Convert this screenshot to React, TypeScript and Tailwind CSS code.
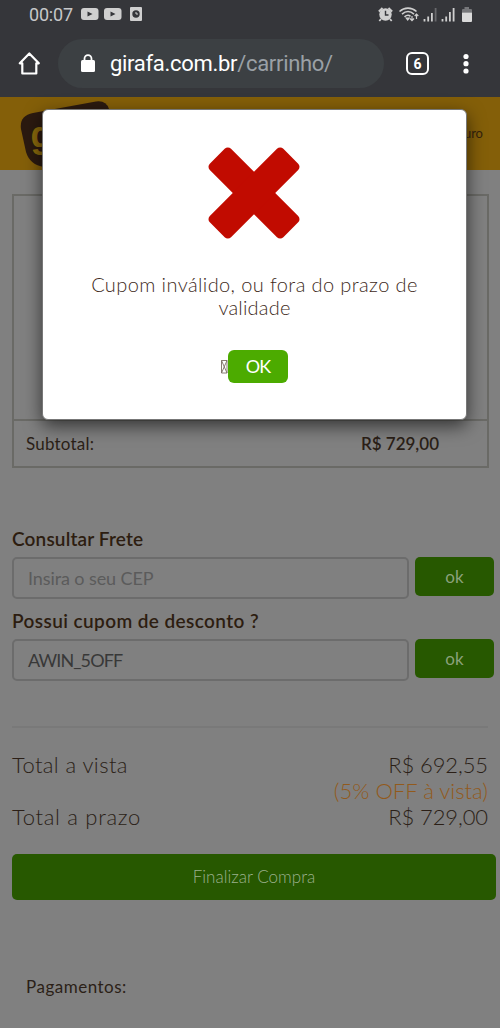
import type { ReactNode } from "react";

function StatusBar() {
  return (
    <div className="flex h-[30px] items-center justify-between pl-[29px] pr-[27px] text-[#c6c7c9]">
      <div className="flex items-center">
        <span className="w-[52px] whitespace-nowrap font-['Roboto'] text-[18px] leading-[30px] tracking-[-0.2px]">00:07</span>
        <svg width="62" height="16" viewBox="0 0 62 16" fill="#cfcfcf">
          <rect x="0" y="1" width="17.500" height="12" rx="3" />
          <rect x="23" y="1" width="17.500" height="12" rx="3" />
          <rect x="49" y="0" width="12" height="14" rx="1" />
          <path d="M6.500 4.500 11.500 7 6.500 9.500ZM29.500 4.500 34.500 7 29.500 9.500Z" fill="#35363a" />
          <circle cx="55" cy="7" r="3.700" fill="#35363a" />
          <path d="M55 5v2h2" stroke="#cfcfcf" strokeWidth="1" fill="none" />
        </svg>
      </div>
      <svg width="96" height="18" viewBox="0 0 96 18" fill="none">
        <circle cx="8.500" cy="8.500" r="6.200" fill="#cfcfcf" />
        <path d="M1.800 5.500 5.500 2M15.200 5.500 11.500 2M4 13 2.300 15M13 13 14.700 15" stroke="#cfcfcf" strokeWidth="1.800" />
        <path d="M8.500 4.800V9h3" stroke="#35363a" strokeWidth="1.400" />
        <path d="M22.500 5.500C27.500 1 34.500 1 39.500 5.500M25 8.200C29 4.600 33 4.600 37 8.200M27.500 10.800C29.700 9 32 9 33.500 10.300" stroke="#cfcfcf" strokeWidth="1.600" />
        <path d="M29.300 12.200h2.800l-1.400 1.800zM35 10v4.500M33 12.500l2 2.200 2-2.200M39.500 13V8.500M37.700 10l1.800-1.900 1.800 1.900" stroke="#cfcfcf" strokeWidth="1.200" />
        <path d="M47.500 13V15.500M51.200 10.500V15.500M54.900 7V15.500M65.500 13V15.500M69.200 10.500V15.500M72.900 6V15.500M76.600 2V15.500" stroke="#cfcfcf" strokeWidth="1.800" />
        <path d="M58.600 2V15.500" stroke="#68696c" strokeWidth="1.800" />
        <path d="M85 6.500V4q0-1 1-1h1.500V1h4.500V3h2q1 0 1 1v2.500z" fill="#76777a" />
        <path d="M85 6.500h10V15q0 1-1 1h-8q-1 0-1-1z" fill="#dadada" />
      </svg>
    </div>
  );
}

function BrowserBar() {
  return (
    <div className="flex h-[67px] items-center pl-[17px]">
      <svg width="24" height="24" viewBox="0 0 24 24" fill="none" stroke="#fff" strokeWidth="2.200" strokeLinejoin="round" className="shrink-0">
        <path d="M12.300 1.500 2.800 11.300H5.300V21.500H19.300V11.300H21.800Z" />
      </svg>
      <div className="ml-[17px] flex h-[49px] w-[326px] shrink-0 items-center rounded-full bg-[#3c4043] pl-[23px]">
        <svg width="14" height="18" viewBox="0 0 14 18" className="mb-[2px] shrink-0">
          <rect x="0" y="6" width="14" height="12" rx="1.500" fill="#fff" />
          <path d="M3.500 7V4.700a3.500 3.500 0 0 1 7 0V7" fill="none" stroke="#fff" strokeWidth="1.800" />
        </svg>
        <span className="ml-[15px] whitespace-nowrap font-['Roboto'] text-[22px] tracking-[-0.3px] text-white">
          girafa.com.br<span className="text-[#9aa0a6]">/carrinho/</span>
        </span>
      </div>
      <div className="ml-[22px] flex h-[23px] w-[23px] shrink-0 items-center justify-center rounded-[6px] border-2 border-white font-['Roboto'] text-[14px] font-bold leading-none text-white">
        6
      </div>
      <svg width="6" height="22" viewBox="0 0 6 22" fill="#fff" className="ml-[34px] shrink-0">
        <circle cx="3" cy="3.500" r="2.600" />
        <circle cx="3" cy="10.700" r="2.600" />
        <circle cx="3" cy="18" r="2.600" />
      </svg>
    </div>
  );
}

function SiteHeader() {
  return (
    <div className="flex h-[73px] justify-between overflow-hidden bg-[#845f09]">
      <svg width="120" height="73" viewBox="0 0 120 73" className="ml-[20px]">
        <path d="M13 16 76 4.500Q86 3 89 12L95 70H24Q10 68 6 55L1 32Q-1 19 13 16Z" fill="#2b1a10" />
        <text x="10.500" y="50" fontFamily="Liberation Sans" fontWeight="700" fontSize="36" fill="#8a690c">g</text>
      </svg>
      <span className="mr-[17px] mt-[27px] font-['Lato'] text-[13px] leading-[18px] text-[#34230d]">seguro</span>
    </div>
  );
}

function Field({ label, children }: { label: ReactNode; children: ReactNode }) {
  return (
    <div className="pl-[12px]">
      <div className="h-[29px] whitespace-nowrap text-[19px] font-semibold leading-[24px] text-[#2d1d10]">{label}</div>
      <div className="flex gap-[6px]">
        <div className="flex h-[42px] w-[397px] items-center rounded-[5px] border-2 border-[#6c6c6c] pl-[14px] text-[18px]">{children}</div>
        <button className="h-[39px] w-[79px] rounded-[5px] bg-[#275800] text-[17px] text-[#8ba17b]">ok</button>
      </div>
    </div>
  );
}

function Cart() {
  return (
    <div className="h-[858px] bg-[#808080] pt-[24px] text-[#2b1f17]">
      <div className="ml-[12px] h-[274px] w-[477px] border-2 border-[#6a6a66]">
        <div className="h-[225px] border-b-2 border-[#6a6a66]" />
        <div className="flex h-[46px] items-center justify-between pl-[12px] pr-[48px]">
          <span className="text-[17px] tracking-[0.2px]">Subtotal:</span>
          <span className="text-[17px] font-semibold">R$ 729,00</span>
        </div>
      </div>
      <div className="mt-[59px] flex flex-col gap-[11px] pt-px">
        <Field label={<span className="relative -top-px tracking-[0.15px]">Consultar Frete</span>}>
          <span className="tracking-[-0.1px] text-[#5b5b5b]">Insira o seu CEP</span>
        </Field>
        <Field label={<span className="relative -top-px tracking-[0.4px]">Possui cupom de desconto ?</span>}>
          <span className="tracking-[-0.9px] text-[#383838]">AWIN_5OFF</span>
        </Field>
      </div>
      <hr className="ml-[12px] mr-[12px] mt-[45px] border-t-2 border-[#797979]" />
      <div className="mx-[12px] mt-[24px] text-[22px] font-light leading-[26px]">
        <div className="flex justify-between">
          <span className="tracking-[0.4px]">Total a vista</span>
          <span className="tracking-[-0.1px]">R$ 692,55</span>
        </div>
        <div className="text-right text-[#925a1c]">(5% OFF à vista)</div>
        <div className="flex justify-between">
          <span className="tracking-[0.7px]">Total a prazo</span>
          <span className="tracking-[-0.1px]">R$ 729,00</span>
        </div>
      </div>
      <button className="ml-[12px] mt-[24px] block h-[46px] w-[484px] rounded-[5px] bg-[#275800] text-[17px] font-light text-[#9bb08c]">
        Finalizar Compra
      </button>
      <div className="ml-[26px] mt-[75px] text-[17px] leading-[24px] tracking-[0.5px]">Pagamentos:</div>
    </div>
  );
}

function CouponModal() {
  return (
    <div className="absolute left-[42px] top-[109px] flex h-[311px] w-[425px] flex-col items-center rounded-[6px] border border-[#777] bg-white shadow-[0_6px_18px_rgba(0,0,0,0.6)]">
      <svg width="92" height="92" viewBox="0 0 92 92" className="mr-[1px] mt-[37px]">
        <g fill="#c10b00" transform="rotate(45 46 46)">
          <rect x="-6" y="31" width="104" height="30" rx="4.500" />
          <rect x="31" y="-6" width="30" height="104" rx="4.500" />
        </g>
      </svg>
      <div className="mt-[34px] text-center text-[20px] font-light leading-[23px] text-[#402a1b]">
        <div className="tracking-[0.4px]">Cupom inválido, ou fora do prazo de</div>
        <div className="tracking-[0.2px]">validade</div>
      </div>
      <div className="mt-[31px] flex items-center">
        <svg width="7" height="14" viewBox="0 0 7 14" fill="none" stroke="#7b6d63" strokeWidth="0.900">
          <path d="M.5.5h5.500v12.500H.5zM.5.5 6 13M6 .5.5 13" />
        </svg>
        <button className="h-[33px] w-[60px] rounded-[6px] bg-[#4cab00] text-[18px] tracking-[-0.8px] text-white">OK</button>
      </div>
    </div>
  );
}

export default function App() {
  return (
    <div className="relative h-[1028px] w-[500px] overflow-hidden bg-[#808080] font-['Lato',sans-serif]">
      <div className="bg-[#35363a]">
        <StatusBar />
        <BrowserBar />
      </div>
      <div className="relative">
        <SiteHeader />
        <Cart />
      </div>
      <CouponModal />
    </div>
  );
}
